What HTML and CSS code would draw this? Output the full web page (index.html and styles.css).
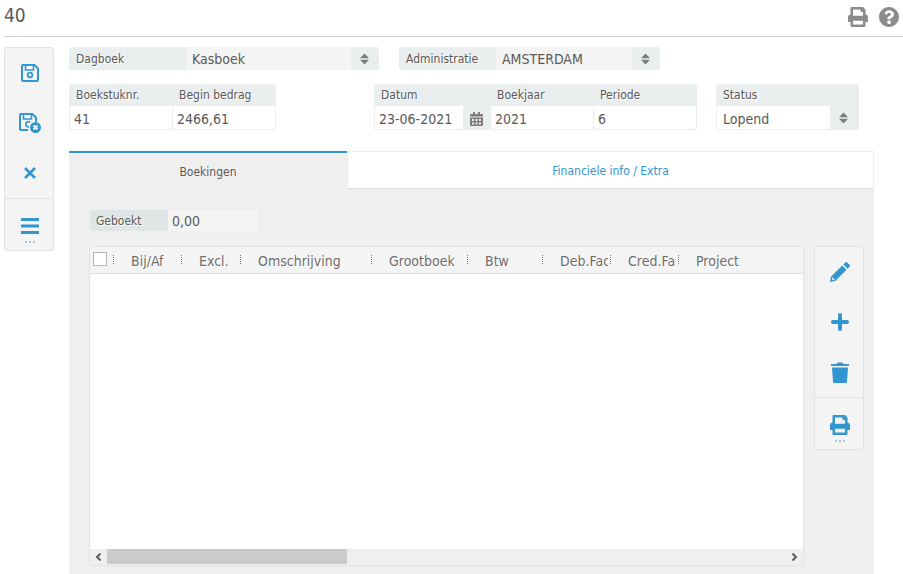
FILE: index.html
```html
<!DOCTYPE html>
<html lang="nl">
<head>
    <meta charset="UTF-8">
    <title>Kasboek</title>
    <link rel="stylesheet" href="styles.css">
</head>
<body>
    <!-- shared icons -->
    <svg class="sprite" aria-hidden="true">
        <symbol id="print" viewBox="0 0 512 512">
            <path d="M448 192V77.25c0-8.49-3.37-16.62-9.37-22.63L393.37 9.37c-6-6-14.14-9.37-22.63-9.37H96C78.33 0 64 14.33 64 32v160c-35.35 0-64 28.65-64 64v112c0 8.84 7.16 16 16 16h48v96c0 17.67 14.33 32 32 32h320c17.67 0 32-14.33 32-32v-96h48c8.84 0 16-7.16 16-16V256c0-35.35-28.65-64-64-64zm-64 256H128v-96h256v96zm0-224H128V64h192v48c0 8.84 7.16 16 16 16h48v96z"/>
        </symbol>
        <symbol id="sort" viewBox="0 0 10 12">
            <path d="M5 0l4.500 4.500v.8H.5v-.8zM5 12l4.500-4.500v-.8H.5v.8z"/>
        </symbol>
        <symbol id="save" viewBox="0 0 18 18">
            <path d="M2 1h11.500L17 4.500V16a1 1 0 0 1-1 1H2a1 1 0 0 1-1-1V2a1 1 0 0 1 1-1z" fill="none" stroke="currentColor" stroke-width="2"/>
            <path d="M4.500 1.500v4.500h8v-4.500" fill="none" stroke="currentColor" stroke-width="1.600"/>
            <circle cx="9" cy="11" r="2.300" fill="none" stroke="currentColor" stroke-width="1.800"/>
        </symbol>
    </svg>

    <header class="header">
        <h1>40</h1>
        <div class="header-actions">
            <button type="button" aria-label="Afdrukken"><svg class="icon"><use href="#print"/></svg></button>
            <button type="button" aria-label="Help">
                <svg class="icon" viewBox="8 8 496 496"><path d="M504 256c0 136.997-111.043 248-248 248S8 392.997 8 256C8 119.083 119.043 8 256 8s248 111.083 248 248zM262.655 90c-54.497 0-89.255 22.957-116.549 63.758-3.536 5.286-2.353 12.415 2.715 16.258l34.699 26.31c5.205 3.947 12.621 3.008 16.665-2.122 17.864-22.658 30.113-35.797 57.303-35.797 20.429 0 45.698 13.148 45.698 32.958 0 14.976-12.363 22.667-32.534 33.976C247.128 238.528 216 254.941 216 296v4c0 6.627 5.373 12 12 12h56c6.627 0 12-5.373 12-12v-1.333c0-28.462 83.186-29.647 83.186-106.667 0-58.002-60.165-102-116.531-102zM256 338c-25.365 0-46 20.635-46 46 0 25.364 20.635 46 46 46s46-20.636 46-46c0-25.365-20.635-46-46-46z"/></svg>
            </button>
        </div>
    </header>

    <div class="page">
        <nav class="toolbar">
            <button type="button" aria-label="Opslaan"><svg class="icon-save"><use href="#save"/></svg></button>
            <button type="button" aria-label="Opslaan en sluiten">
                <svg class="icon-save-close" viewBox="0 0 22 20">
                    <path d="M9 17H2a1 1 0 0 1-1-1V2a1 1 0 0 1 1-1h11.500L17 4.500V9" fill="none" stroke="currentColor" stroke-width="2"/>
                    <path d="M4.500 1.500v4.500h8v-4.500" fill="none" stroke="currentColor" stroke-width="1.600"/>
                    <path d="M11 9.300a2.600 2.600 0 1 0-1 4.500" fill="none" stroke="currentColor" stroke-width="1.800"/>
                    <circle cx="16.500" cy="14.500" r="5.500"/>
                    <path d="M14.500 12.500l4 4m0-4l-4 4" stroke="#f4f4f4" stroke-width="1.800"/>
                </svg>
            </button>
            <button type="button" aria-label="Sluiten">
                <svg class="icon-close" viewBox="0 0 12 12"><path d="M1 1l10 10M11 1L1 11" stroke="currentColor" stroke-width="2.600"/></svg>
            </button>
            <button type="button" class="more" aria-label="Menu">
                <svg class="icon-menu" viewBox="0 0 18 16"><path d="M0 1.500h18M0 8h18M0 14.500h18" stroke="currentColor" stroke-width="2.800"/></svg>
                <span class="dots"></span>
            </button>
        </nav>

        <main class="content">
            <form class="form">
                <div class="row">
                    <div class="field dagboek">
                        <label for="dagboek">Dagboek</label>
                        <div class="select">
                            <select id="dagboek"><option>Kasboek</option></select>
                            <span class="arrow"><svg><use href="#sort"/></svg></span>
                        </div>
                    </div>
                    <div class="field administratie">
                        <label for="administratie">Administratie</label>
                        <div class="select">
                            <select id="administratie"><option>AMSTERDAM</option></select>
                            <span class="arrow"><svg><use href="#sort"/></svg></span>
                        </div>
                    </div>
                </div>

                <div class="row cells">
                    <div class="group">
                        <div class="cell">
                            <label for="boekstuk">Boekstuknr.</label>
                            <input type="text" id="boekstuk" value="41">
                        </div>
                        <div class="cell">
                            <label for="begin">Begin bedrag</label>
                            <input type="text" id="begin" value="2466,61">
                        </div>
                    </div>
                    <div class="group period">
                        <div class="cell date">
                            <label for="datum">Datum</label>
                            <div class="date-box">
                                <input type="text" id="datum" value="23-06-2021">
                                <button type="button" aria-label="Kalender">
                                    <svg viewBox="0 0 13 14">
                                        <path d="M3 0h2v2h3V0h2v2h2a1 1 0 0 1 1 1v1.500H0V3a1 1 0 0 1 1-1h2zM0 5.500h13V13a1 1 0 0 1-1 1H1a1 1 0 0 1-1-1z"/>
                                        <path d="M2 7h2v2H2zM5.500 7h2v2h-2zM9 7h2v2H9zM2 10.500h2v2H2zM5.500 10.500h2v2h-2zM9 10.500h2v2H9z" fill="#eaeeef"/>
                                    </svg>
                                </button>
                            </div>
                        </div>
                        <div class="cell">
                            <label for="boekjaar">Boekjaar</label>
                            <input type="text" id="boekjaar" value="2021">
                        </div>
                        <div class="cell">
                            <label for="periode">Periode</label>
                            <input type="text" id="periode" value="6">
                        </div>
                    </div>
                    <div class="group">
                        <div class="cell status">
                            <label for="status">Status</label>
                            <div class="select">
                                <select id="status"><option>Lopend</option></select>
                                <span class="arrow"><svg><use href="#sort"/></svg></span>
                            </div>
                        </div>
                    </div>
                </div>
            </form>

            <div class="tabs" role="tablist">
                <button type="button" role="tab" class="tab active" aria-selected="true">Boekingen</button>
                <button type="button" role="tab" class="tab" aria-selected="false">Financiele info / Extra</button>
            </div>

            <section class="panel">
                <div class="field geboekt">
                    <label for="geboekt">Geboekt</label>
                    <input type="text" id="geboekt" value="0,00" readonly>
                </div>

                <div class="panel-body">
                    <div class="grid">
                        <div class="grid-view">
                            <table>
                                <colgroup>
                                    <col class="c-check">
                                    <col class="c-medium">
                                    <col class="c-excl">
                                    <col class="c-desc">
                                    <col class="c-ledger">
                                    <col class="c-btw">
                                    <col class="c-medium">
                                    <col class="c-medium">
                                    <col>
                                </colgroup>
                                <thead>
                                    <tr>
                                        <th class="check"><input type="checkbox" aria-label="Alles selecteren"></th>
                                        <th><div>Bij/Af</div></th>
                                        <th><div>Excl.</div></th>
                                        <th><div>Omschrijving</div></th>
                                        <th><div>Grootboek</div></th>
                                        <th><div>Btw</div></th>
                                        <th><div>Deb.Fac</div></th>
                                        <th><div>Cred.Fa</div></th>
                                        <th><div>Project</div></th>
                                    </tr>
                                </thead>
                            </table>
                        </div>
                        <div class="scrollbar">
                            <button type="button" aria-label="Naar links"><svg viewBox="0 0 7 8"><path d="M5.500 .5L2 4l3.500 3.500" fill="none" stroke="currentColor" stroke-width="2"/></svg></button>
                            <div class="track"><div class="thumb"></div></div>
                            <button type="button" aria-label="Naar rechts"><svg viewBox="0 0 7 8"><path d="M1.500 .5L5 4 1.500 7.500" fill="none" stroke="currentColor" stroke-width="2"/></svg></button>
                        </div>
                    </div>

                    <nav class="toolbar">
                        <button type="button" aria-label="Wijzigen">
                            <svg class="icon" viewBox="0 0 20 20">
                                <path d="M12.200 3.500l4.300 4.300L5.300 19 0 20l1-5.300zM13.300 2.400L15 .7a1.700 1.700 0 0 1 2.400 0l1.900 1.900a1.700 1.700 0 0 1 0 2.400l-1.700 1.700z"/>
                                <path d="M2.200 15.400l1 .1.200 1.200 1.200.2.100 1-1.500.4-1.300-1.300z" fill="#f4f4f4"/>
                            </svg>
                        </button>
                        <button type="button" aria-label="Toevoegen">
                            <svg class="icon-save" viewBox="0 0 18 18"><path d="M9 2v14M2 9h14" stroke="currentColor" stroke-width="4" stroke-linecap="round"/></svg>
                        </button>
                        <button type="button" aria-label="Verwijderen">
                            <svg class="icon-trash" viewBox="0 0 18 21"><path d="M0 2h5.500l1-1.500h5l1 1.500H18v2H0zM1 5.500h16L16 19.500a1.500 1.500 0 0 1-1.500 1.500h-11A1.500 1.500 0 0 1 2 19.500z"/></svg>
                        </button>
                        <button type="button" class="more" aria-label="Afdrukken">
                            <svg class="icon"><use href="#print"/></svg>
                            <span class="dots"></span>
                        </button>
                    </nav>
                </div>
            </section>
        </main>
    </div>
</body>
</html>
```
FILE: styles.css
```css
* {
    box-sizing: border-box;
}
body {
    margin: 0;
    min-height: 100vh;
    display: flex;
    flex-direction: column;
    background: #fff;
    color: #5a5a5a;
    font-family: Tahoma, "DejaVu Sans Condensed", "Noto Sans", sans-serif;
    font-size: 14px;
}
button, input, select {
    font: inherit;
    color: inherit;
    border: none;
    border-radius: 0;
    margin: 0;
    padding: 0;
    background: none;
    min-width: 0;
}
button {
    cursor: pointer;
}
svg {
    display: block;
    fill: currentColor;
}
.sprite {
    position: absolute;
    width: 0;
    height: 0;
}
.icon {
    width: 20px;
    height: 20px;
}

/* header */
.header {
    display: flex;
    justify-content: space-between;
    height: 37px;
    margin-left: 4px;
    padding-right: 4px;
    border-bottom: 1px solid #d2d2d2;
}
h1 {
    margin: 0;
    font-size: 19px;
    line-height: 31px;
    font-weight: normal;
}
.header-actions {
    display: flex;
    align-items: center;
    gap: 11px;
    height: 33px;
    color: #8c8c8c;
}

.page {
    flex: 1;
    display: flex;
    align-items: flex-start;
    gap: 15px;
    padding: 10px 29px 0 4px;
}

/* toolbars */
.toolbar {
    flex: none;
    width: 50px;
    background: #f4f4f4;
    border: 1px solid #e2e2e2;
    border-radius: 3px;
    color: #3296d0;
}
.toolbar button {
    display: flex;
    align-items: center;
    justify-content: center;
    width: 100%;
    height: 50px;
    padding-left: 2px;
}
.toolbar .more {
    flex-direction: column;
    justify-content: flex-end;
    gap: 7px;
    height: 52px;
    padding-bottom: 7px;
    border-top: 1px solid #e2e2e2;
}
.toolbar .more .icon {
    margin-bottom: -2px;
}
.icon-save {
    width: 18px;
    height: 18px;
}
.icon-save-close {
    width: 22px;
    height: 20px;
}
.icon-close {
    width: 12px;
    height: 12px;
}
.icon-menu {
    width: 18px;
    height: 16px;
}
.icon-trash {
    width: 18px;
    height: 21px;
}
.dots {
    width: 10px;
    height: 2px;
    background: repeating-linear-gradient(to right, #9ccbe8 0 2px, transparent 2px 4px);
}

/* form */
.content {
    flex: 1;
    align-self: stretch;
    display: flex;
    flex-direction: column;
    min-width: 0;
}
.row {
    display: flex;
    gap: 20px;
    margin-bottom: 14px;
}
label {
    font-size: 12px;
    line-height: 22px;
    padding-left: 7px;
    background: #eaeeef;
    text-shadow: 1px 1px 0 #fff;
}
.field {
    display: flex;
    height: 23px;
    border-radius: 3px;
    overflow: hidden;
}
.field label {
    line-height: 24px;
}
.dagboek {
    width: 310px;
}
.dagboek label {
    width: 117px;
}
.administratie {
    width: 261px;
}
.administratie label {
    width: 97px;
}
.select {
    flex: 1;
    display: grid;
    grid-template-columns: 1fr 28px;
}
select {
    appearance: none;
    grid-area: 1 / 1 / 2 / 3;
    width: 100%;
    height: 23px;
    padding-left: 6px;
    background: #f4f4f4;
}
.arrow {
    grid-area: 1 / 2;
    display: flex;
    align-items: center;
    justify-content: center;
    padding: 1px 1px 0 0;
    background: #eaeeef;
    color: #7d7d7d;
    pointer-events: none;
}
.arrow svg {
    width: 9px;
    height: 12px;
}
.cells {
    gap: 19px;
    margin-bottom: 21px;
}
.group {
    display: flex;
    height: 46px;
}
.period {
    margin-left: 79px;
}
.cell {
    display: flex;
    flex-direction: column;
    width: 104px;
    border: 1px solid #eaeeef;
    border-top: none;
    border-radius: 3px;
    overflow: hidden;
}
.cell + .cell {
    margin-left: -1px;
}
.cell label {
    padding-left: 6px;
}
.cell input {
    width: 100%;
    height: 23px;
    padding: 2px 0 0 4px;
}
.date {
    width: 117px;
}
.date-box {
    display: flex;
}
.date-box button {
    flex: none;
    display: flex;
    align-items: center;
    justify-content: center;
    width: 27px;
    height: 23px;
    padding-top: 2px;
    background: #eaeeef;
    color: #7d7d7d;
}
.date-box svg {
    width: 13px;
    height: 14px;
}
.status {
    width: 143px;
}
.status select {
    padding-top: 2px;
    background: #fff;
}

/* tabs */
.tabs {
    display: flex;
    background: #efefef;
}
.tab {
    flex: 1;
    height: 38px;
    padding-top: 2px;
    font-size: 12px;
    color: #3296d0;
    background: #fff;
    border: 1px solid #ececec;
    border-bottom-color: #dedede;
}
.tab.active {
    flex: none;
    width: 278px;
    color: #5a5a5a;
    background: #efefef;
    border: none;
    border-top: 2px solid #3296d0;
}

.panel {
    flex: 1;
    display: flex;
    flex-direction: column;
    gap: 15px;
    padding: 21px 10px 8px 20px;
    background: #efefef;
}
.geboekt {
    width: 168px;
    height: 21px;
    margin-left: 1px;
}
.geboekt label {
    width: 78px;
    line-height: 22px;
    padding-left: 6px;
    background: #e0e5e6;
}
.geboekt input {
    flex: 1;
    padding-left: 4px;
    background: #f4f4f4;
}
.panel-body {
    flex: 1;
    display: flex;
    align-items: flex-start;
    gap: 10px;
}

/* bookings grid */
.grid {
    flex: 1;
    align-self: stretch;
    display: flex;
    flex-direction: column;
    min-width: 0;
    min-height: 320px;
    background: #fff;
    border: 1px solid #e2e2e2;
    border-radius: 3px 3px 0 0;
}
.grid-view {
    flex: 1;
    overflow: hidden;
}
table {
    width: 100%;
    table-layout: fixed;
    border-collapse: separate;
    border-spacing: 0;
}
th {
    height: 27px;
    padding: 1px 2px 0 18px;
    font-weight: normal;
    text-align: left;
    color: #6e6e6e;
    border-bottom: 1px solid #dedede;
    background: repeating-linear-gradient(to bottom, #777 0 1px, transparent 1px 2px) no-repeat 0 8px / 1px 10px #f4f4f4;
}
th div {
    overflow: hidden;
    white-space: nowrap;
    text-shadow: 1px 1px 0 #fff;
}
th.check {
    padding: 0 0 2px 3px;
    background: #f4f4f4;
}
.check input {
    appearance: none;
    display: block;
    width: 14px;
    height: 14px;
    background: #fff;
    border: 1px solid #b4b4b4;
}
.c-check {
    width: 23px;
}
.c-medium {
    width: 68px;
}
.c-excl {
    width: 59px;
}
.c-desc {
    width: 131px;
}
.c-ledger {
    width: 96px;
}
.c-btw {
    width: 75px;
}

.scrollbar {
    display: flex;
    height: 16px;
    background: #efefef;
}
.scrollbar button {
    display: flex;
    align-items: center;
    justify-content: center;
    width: 17px;
}
.scrollbar svg {
    width: 7px;
    height: 8px;
}
.track {
    flex: 1;
}
.thumb {
    width: 240px;
    height: 15px;
    background: #cbcbcb;
}
```
